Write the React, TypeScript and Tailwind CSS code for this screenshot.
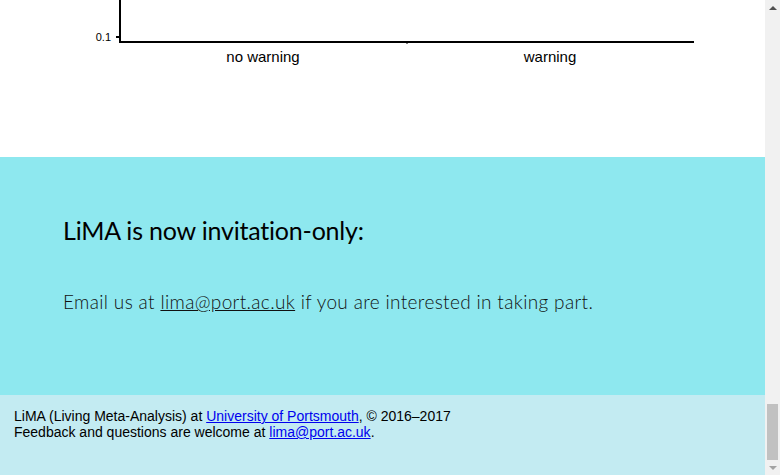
import React from 'react';

const Chart = () => (
  <svg width="765" height="157" className="block">
    <line x1="120" y1="0" x2="120" y2="43" stroke="#000" strokeWidth="2" />
    <line x1="116" y1="37" x2="120" y2="37" stroke="#000" strokeWidth="2" />
    <line x1="119" y1="42" x2="694" y2="42" stroke="#000" strokeWidth="2" />
    <line x1="407" y1="42" x2="407" y2="44" stroke="#000" strokeWidth="1" />
    <text x="111" y="41" textAnchor="end" fontSize="11" fontFamily="Liberation Sans, sans-serif" fill="#000">
      0.1
    </text>
    <text x="263" y="62" textAnchor="middle" fontSize="15" fontFamily="Liberation Sans, sans-serif" fill="#000">
      no warning
    </text>
    <text x="550" y="62" textAnchor="middle" fontSize="15" fontFamily="Liberation Sans, sans-serif" fill="#000">
      warning
    </text>
  </svg>
);

const Scrollbar = () => (
  <div className="flex w-[15px] shrink-0 flex-col items-center bg-[#f1f1f1]">
    <div className="flex h-[15px] w-full items-center justify-center">
      <div className="h-0 w-0 border-x-[4px] border-b-[4px] border-x-transparent border-b-[#505050]" />
    </div>
    <div className="flex-1" />
    <div className="h-[56px] w-[11px] bg-[#c1c1c1]" />
    <div className="flex h-[15px] w-full items-center justify-center">
      <div className="h-0 w-0 border-x-[4px] border-t-[4px] border-x-transparent border-t-[#a3a3a3]" />
    </div>
  </div>
);

const App = () => {
  return (
    <div className="flex h-[475px] w-[780px] overflow-hidden bg-white">
      <div className="flex w-[765px] flex-col">
        <div className="h-[157px] bg-white">
          <Chart />
        </div>
        <div className="flex h-[238px] flex-col bg-[#8ee8ef] pl-[63px] pt-[57px] text-black [font-family:Lato,'Open_Sans',sans-serif]">
          <h2 className="text-[25px] leading-[32px] tracking-[-0.2px]">LiMA is now invitation-only:</h2>
          <p className="mt-[43px] text-[19px] font-light leading-[26px] tracking-[0.35px] text-[#111]">
            Email us at{' '}
            <a href="#" className="underline">
              lima@port.ac.uk
            </a>{' '}
            if you are interested in taking part.
          </p>
        </div>
        <div className="flex-1 bg-[#c3ebf2] px-[14px] pt-[13px] text-[14px] leading-[16px] text-black [font-family:'Liberation_Sans',Arial,sans-serif]">
          <div>
            LiMA (Living Meta-Analysis) at{' '}
            <a href="#" className="text-[#0000ee] underline">
              University of Portsmouth
            </a>
            , © 2016–2017
          </div>
          <div>
            Feedback and questions are welcome at{' '}
            <a href="#" className="text-[#0000ee] underline">
              lima@port.ac.uk
            </a>
            .
          </div>
        </div>
      </div>
      <Scrollbar />
    </div>
  );
};

export default App;
